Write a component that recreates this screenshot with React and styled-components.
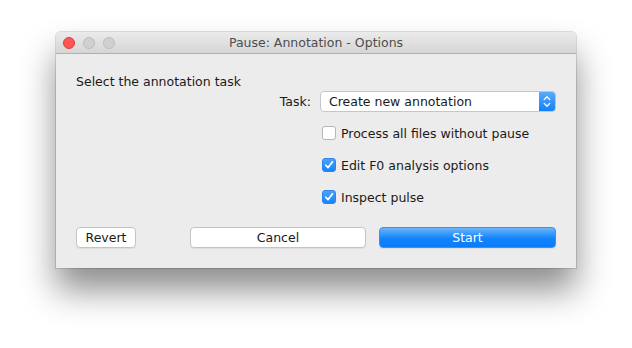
import React from "react";
import styled, { createGlobalStyle } from "styled-components";

const Global = createGlobalStyle`
  html, body {
    margin: 0;
    padding: 0;
    background: #ffffff;
  }
  body {
    font-family: "DejaVu Sans", "Liberation Sans", sans-serif;
    font-size: 12.5px;
    color: #1a1a1a;
  }
`;

const Page = styled.div`
  width: 632px;
  height: 348px;
  padding: 32px 0 0 56px;
  box-sizing: border-box;
`;

const Window = styled.div`
  width: 520px;
  height: 236px;
  background: #ececec;
  border-radius: 5px 5px 0 0;
  box-shadow: 0 0 0 1px rgba(0, 0, 0, 0.12), 0 22px 34px rgba(0, 0, 0, 0.45);
  display: flex;
  flex-direction: column;
  overflow: hidden;
`;

const TitleBar = styled.div`
  height: 21px;
  background: linear-gradient(#ebebeb, #d5d5d5);
  border-bottom: 1px solid #b0b0b0;
  display: flex;
  align-items: center;
  position: relative;
  padding-left: 7px;
`;

const Lights = styled.div`
  display: flex;
  gap: 8px;
`;

const Light = styled.span`
  width: 12px;
  height: 12px;
  border-radius: 50%;
  box-sizing: border-box;
  background: ${(p) => (p.$red ? "#fc5753" : "#d0d0d0")};
  border: 1px solid ${(p) => (p.$red ? "#df3d3a" : "#bdbdbd")};
`;

const Title = styled.div`
  position: absolute;
  left: 0;
  right: 0;
  text-align: center;
  color: #4d4d4d;
  font-size: 12.5px;
`;

const Body = styled.div`
  padding: 20px 20px 0 20px;
  display: flex;
  flex-direction: column;
`;

const Heading = styled.div`
  height: 16px;
  line-height: 16px;
`;

const TaskRow = styled.div`
  margin-top: 1px;
  display: flex;
  justify-content: flex-end;
  align-items: center;
  gap: 9px;
`;

const Select = styled.div`
  width: 236px;
  height: 21px;
  box-sizing: border-box;
  background: #fff;
  border: 1px solid #c6c6c6;
  border-radius: 4px;
  display: flex;
  align-items: center;
  padding-left: 8px;
  position: relative;
  overflow: hidden;
`;

const Stepper = styled.div`
  position: absolute;
  top: 0;
  right: 0;
  bottom: 0;
  width: 16px;
  background: linear-gradient(#5aabf9, #1380fa);
  display: flex;
  align-items: center;
  justify-content: center;
`;

const Checks = styled.div`
  margin: 14px 0 0 246px;
  display: flex;
  flex-direction: column;
  gap: 18px;
`;

const CheckRow = styled.label`
  display: flex;
  align-items: center;
  gap: 5px;
  height: 14px;
`;

const Box = styled.span`
  width: 14px;
  height: 14px;
  box-sizing: border-box;
  border-radius: 3px;
  display: flex;
  align-items: center;
  justify-content: center;
  background: ${(p) => (p.$on ? "linear-gradient(#4ba3f9, #1a82f9)" : "#fff")};
  border: 1px solid ${(p) => (p.$on ? "#2f86e8" : "#b5b5b5")};
`;

const Buttons = styled.div`
  margin-top: 23px;
  display: flex;
  align-items: center;
`;

const Button = styled.div`
  height: 21px;
  box-sizing: border-box;
  width: ${(p) => p.$w}px;
  margin-left: ${(p) => p.$ml || 0}px;
  border-radius: 4px;
  display: flex;
  align-items: center;
  justify-content: center;
  background: ${(p) => (p.$primary ? "linear-gradient(#6bb5fb, #1184fc 55%, #0a7cf8)" : "#fff")};
  color: ${(p) => (p.$primary ? "#fff" : "#1a1a1a")};
  border: 1px solid ${(p) => (p.$primary ? "#3a8ff0" : "#c4c4c4")};
  box-shadow: 0 1px 0 rgba(0, 0, 0, 0.06);
`;

const Check = () => (
  <svg width="10" height="10" viewBox="0 0 10 10">
    <path d="M1.8 5.2 L4 7.6 L8.4 2" fill="none" stroke="#fff" strokeWidth="1.7" strokeLinecap="round" strokeLinejoin="round" />
  </svg>
);

const Arrows = () => (
  <svg width="8" height="13" viewBox="0 0 8 13">
    <path d="M1.2 4.6 L4 1.8 L6.8 4.6 M1.2 8.4 L4 11.2 L6.8 8.4" fill="none" stroke="#fff" strokeWidth="1.3" strokeLinecap="round" strokeLinejoin="round" />
  </svg>
);

const options = [
  { label: "Process all files without pause", on: false },
  { label: "Edit F0 analysis options", on: true },
  { label: "Inspect pulse", on: true },
];

export default function App() {
  return (
    <>
      <Global />
      <Page>
        <Window>
          <TitleBar>
            <Lights>
              <Light $red />
              <Light />
              <Light />
            </Lights>
            <Title>Pause: Annotation - Options</Title>
          </TitleBar>
          <Body>
            <Heading>Select the annotation task</Heading>
            <TaskRow>
              <span>Task:</span>
              <Select>
                Create new annotation
                <Stepper>
                  <Arrows />
                </Stepper>
              </Select>
            </TaskRow>
            <Checks>
              {options.map((o) => (
                <CheckRow key={o.label}>
                  <Box $on={o.on}>{o.on && <Check />}</Box>
                  {o.label}
                </CheckRow>
              ))}
            </Checks>
            <Buttons>
              <Button $w={60}>Revert</Button>
              <Button $w={176} $ml={54}>Cancel</Button>
              <Button $w={177} $ml={13} $primary>Start</Button>
            </Buttons>
          </Body>
        </Window>
      </Page>
    </>
  );
}
